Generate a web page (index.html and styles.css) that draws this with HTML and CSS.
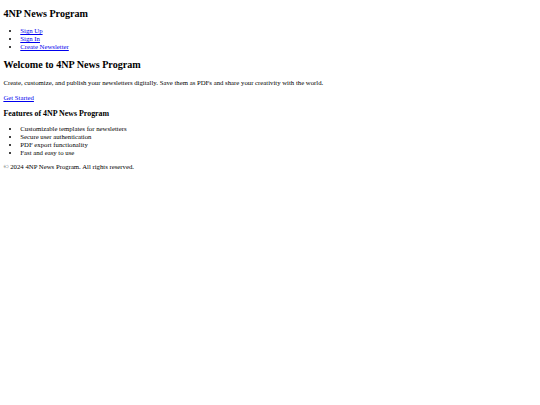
FILE: index.html
```html
<!DOCTYPE html>
<html lang="en">
<head>
<meta charset="utf-8">
<title>4NP News Program</title>
<link rel="stylesheet" href="styles.css">
</head>
<body class="page">
<header class="site-header">
  <h1 class="site-title">4NP News Program</h1>
  <nav>
    <ul class="list">
      <li><a class="link" href="#">Sign Up</a></li>
      <li><a class="link" href="#">Sign In</a></li>
      <li><a class="link" href="#">Create Newsletter</a></li>
    </ul>
  </nav>
</header>
<main>
  <section>
    <h2 class="title">Welcome to 4NP News Program</h2>
    <p class="text">Create, customize, and publish your newsletters digitally. Save them as PDFs and share your creativity with the world.</p>
    <p class="text"><a class="link" href="#">Get Started</a></p>
  </section>
  <section>
    <h3 class="subtitle">Features of 4NP News Program</h3>
    <ul class="list">
      <li>Customizable templates for newsletters</li>
      <li>Secure user authentication</li>
      <li>PDF export functionality</li>
      <li>Fast and easy to use</li>
    </ul>
  </section>
</main>
<footer>
  <p class="text">&copy; 2024 4NP News Program. All rights reserved.</p>
</footer>
</body>
</html>
```
FILE: styles.css
```css
html {
  background: #ffffff;
}
.page {
  margin: 0 3.375px 3.375px;
  padding-top: 0;
  font-family: "Liberation Serif", "Times New Roman", serif;
  font-size: 6.75px;
  line-height: 7.76px;
  color: #000000;
}
.site-title,
.title {
  font-size: 10.125px;
  line-height: 11.64px;
  font-weight: bold;
  margin: 8.4px 0;
}
.site-title {
  margin-bottom: 7.4px;
}
.subtitle {
  font-size: 7.9px;
  line-height: 9.07px;
  font-weight: bold;
  margin: 7.4px 0;
}
.list {
  margin: 6.75px 0;
  padding-left: 16.9px;
}
.text {
  margin: 6.75px 0;
}
.link {
  color: #0000ee;
  text-decoration: underline;
}
```
